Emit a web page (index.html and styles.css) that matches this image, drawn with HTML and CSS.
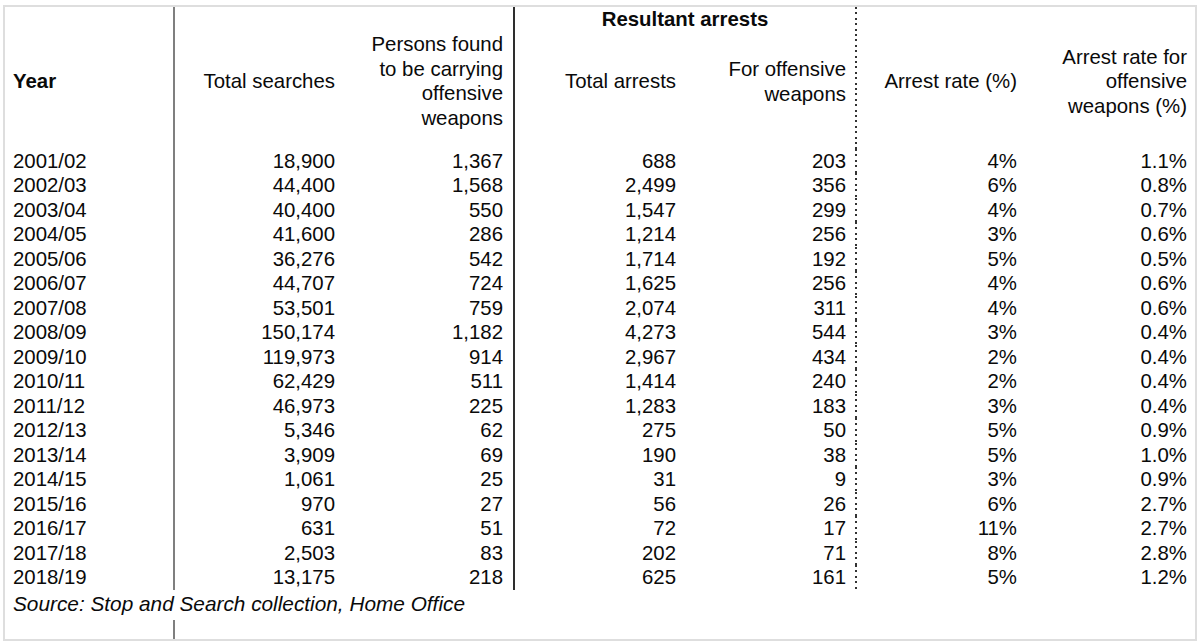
FILE: index.html
```html
<!DOCTYPE html>
<html lang="en">
<head>
<meta charset="utf-8">
<title>Stop and search – offensive weapons</title>
<link rel="stylesheet" href="styles.css">
</head>
<body>
<div class="frame">
<table class="data">
  <colgroup>
    <col class="col"><col class="col"><col class="col"><col class="col"><col class="col"><col class="col"><col class="col">
  </colgroup>
  <thead>
    <tr class="ha">
      <th rowspan="2" class="span l b gray">Year</th>
      <th rowspan="2" class="span p10">Total searches</th>
      <th rowspan="2" class="span dark p12">Persons found<br>to be carrying<br>offensive<br>weapons</th>
      <th colspan="2" class="c b group">Resultant arrests</th>
      <th rowspan="2" class="span dot p8">Arrest rate (%)</th>
      <th rowspan="2" class="span p8">Arrest rate for<br>offensive<br>weapons (%)</th>
    </tr>
    <tr class="hb">
      <th class="sub">Total arrests</th>
      <th class="sub">For offensive<br>weapons</th>
    </tr>
  </thead>
  <tbody>
    <tr><td class="l gray">2001/02</td><td>18,900</td><td class="dark">1,367</td><td>688</td><td>203</td><td class="dot">4%</td><td>1.1%</td></tr>
    <tr><td class="l gray">2002/03</td><td>44,400</td><td class="dark">1,568</td><td>2,499</td><td>356</td><td class="dot">6%</td><td>0.8%</td></tr>
    <tr><td class="l gray">2003/04</td><td>40,400</td><td class="dark">550</td><td>1,547</td><td>299</td><td class="dot">4%</td><td>0.7%</td></tr>
    <tr><td class="l gray">2004/05</td><td>41,600</td><td class="dark">286</td><td>1,214</td><td>256</td><td class="dot">3%</td><td>0.6%</td></tr>
    <tr><td class="l gray">2005/06</td><td>36,276</td><td class="dark">542</td><td>1,714</td><td>192</td><td class="dot">5%</td><td>0.5%</td></tr>
    <tr><td class="l gray">2006/07</td><td>44,707</td><td class="dark">724</td><td>1,625</td><td>256</td><td class="dot">4%</td><td>0.6%</td></tr>
    <tr><td class="l gray">2007/08</td><td>53,501</td><td class="dark">759</td><td>2,074</td><td>311</td><td class="dot">4%</td><td>0.6%</td></tr>
    <tr><td class="l gray">2008/09</td><td>150,174</td><td class="dark">1,182</td><td>4,273</td><td>544</td><td class="dot">3%</td><td>0.4%</td></tr>
    <tr><td class="l gray">2009/10</td><td>119,973</td><td class="dark">914</td><td>2,967</td><td>434</td><td class="dot">2%</td><td>0.4%</td></tr>
    <tr><td class="l gray">2010/11</td><td>62,429</td><td class="dark">511</td><td>1,414</td><td>240</td><td class="dot">2%</td><td>0.4%</td></tr>
    <tr><td class="l gray">2011/12</td><td>46,973</td><td class="dark">225</td><td>1,283</td><td>183</td><td class="dot">3%</td><td>0.4%</td></tr>
    <tr><td class="l gray">2012/13</td><td>5,346</td><td class="dark">62</td><td>275</td><td>50</td><td class="dot">5%</td><td>0.9%</td></tr>
    <tr><td class="l gray">2013/14</td><td>3,909</td><td class="dark">69</td><td>190</td><td>38</td><td class="dot">5%</td><td>1.0%</td></tr>
    <tr><td class="l gray">2014/15</td><td>1,061</td><td class="dark">25</td><td>31</td><td>9</td><td class="dot">3%</td><td>0.9%</td></tr>
    <tr><td class="l gray">2015/16</td><td>970</td><td class="dark">27</td><td>56</td><td>26</td><td class="dot">6%</td><td>2.7%</td></tr>
    <tr><td class="l gray">2016/17</td><td>631</td><td class="dark">51</td><td>72</td><td>17</td><td class="dot">11%</td><td>2.7%</td></tr>
    <tr><td class="l gray">2017/18</td><td>2,503</td><td class="dark">83</td><td>202</td><td>71</td><td class="dot">8%</td><td>2.8%</td></tr>
    <tr><td class="l gray">2018/19</td><td>13,175</td><td class="dark">218</td><td>625</td><td>161</td><td class="dot">5%</td><td>1.2%</td></tr>
  </tbody>
  <tfoot>
    <tr><td colspan="7" class="l source">Source: Stop and Search collection, Home Office</td></tr>
    <tr><td class="gray tail"></td><td colspan="6" class="tail"></td></tr>
  </tfoot>
</table>
</div>
</body>
</html>
```

FILE: styles.css
```css
* { box-sizing: border-box; }

body {
  margin: 0;
  background: #fff;
  font-family: "Liberation Sans", Arial, Helvetica, sans-serif;
  color: #0a0a0a;
}

.frame {
  margin: 5px 3px 3px 3px;
  border: 2px solid #dedede;
  height: 636px;
  overflow: hidden;
}

.data {
  border-collapse: separate;
  border-spacing: 0;
  table-layout: fixed;
  width: 1190px;
  font-size: 20.4px;
  line-height: 24.5px;
}

.col { width: 170px; }

.data th,
.data td {
  padding: 0 9px 0 8px;
  text-align: right;
  font-weight: normal;
  vertical-align: middle;
}

.data .l { text-align: left; }
.data .c { text-align: center; }
.data .b { font-weight: bold; }

.ha { height: 24px; }
.hb { height: 117px; }

.data .span { padding-top: 7px; padding-bottom: 0; }
.data .sub { padding-bottom: 17px; }
.data .group { padding-left: 0; padding-right: 0; }

.data .p8 { padding-right: 8px; }
.data .p10 { padding-right: 10px; }
.data .p12 { padding-right: 12px; }

.data tbody td:nth-child(2) { padding-right: 10px; }
.data tbody td:nth-child(3) { padding-right: 12px; }
.data tbody td:nth-child(6),
.data tbody td:nth-child(7) { padding-right: 8px; }

.gray {
  background: linear-gradient(#7f7f7f, #7f7f7f) right top / 2px 100% no-repeat;
}
.dark {
  background: linear-gradient(#2e2e2e, #2e2e2e) right top / 2px 100% no-repeat;
}
.dot {
  background: repeating-linear-gradient(to bottom, #333 0, #333 2px, transparent 2px, transparent 5.4px) left top / 2px 100% no-repeat;
}

.data .source {
  height: 30px;
  font-style: italic;
  font-size: 20.8px;
}

.data .tail { height: 20px; }
```
